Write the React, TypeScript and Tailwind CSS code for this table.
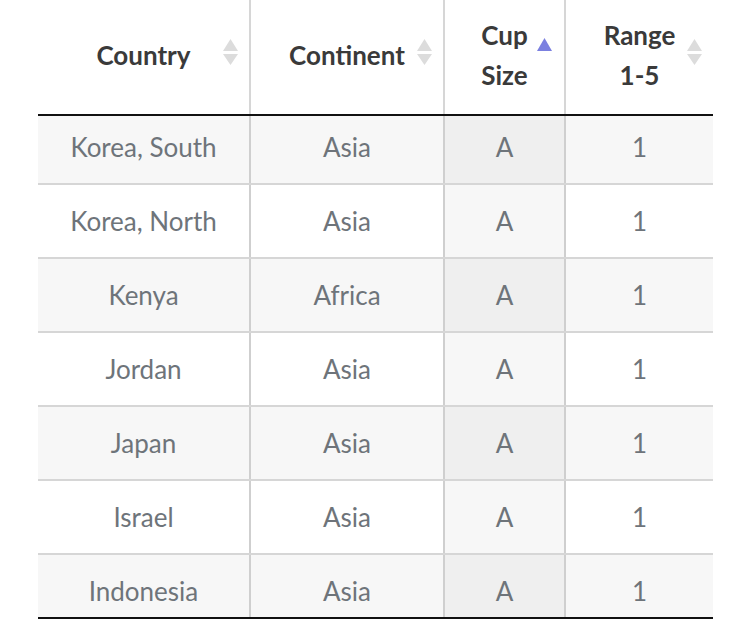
import React from "react";

const rows = [
  ["Korea, South", "Asia", "A", "1"],
  ["Korea, North", "Asia", "A", "1"],
  ["Kenya", "Africa", "A", "1"],
  ["Jordan", "Asia", "A", "1"],
  ["Japan", "Asia", "A", "1"],
  ["Israel", "Asia", "A", "1"],
  ["Indonesia", "Asia", "A", "1"],
];

function SortIcon() {
  return (
    <svg width="17" height="28" viewBox="0 0 17 28" className="absolute right-[10px] top-[38px]">
      <polygon points="8.5,1 16,13 1,13" fill="#dcdcdc" />
      <polygon points="1,16 16,16 8.5,27" fill="#dcdcdc" />
    </svg>
  );
}

const widths = ["w-[213px]", "w-[194px]", "w-[121px]", "w-[147px]"];

export default function App() {
  return (
    <div className="w-[750px] h-[619px] overflow-hidden bg-white" style={{ fontFamily: "Lato, 'Open Sans', sans-serif" }}>
      <div className="ml-[38px] w-[675px]">
        {/* header */}
        <div className="flex h-[116px] text-[26px] font-bold text-[#3a3a3a] border-b-2 border-[#111]">
          <div className="relative w-[213px] flex items-center justify-center pb-1 border-r-2 border-[#d6d6d6]">
            <span>Country</span>
            <SortIcon />
          </div>
          <div className="relative w-[194px] flex items-center justify-center pb-1 border-r-2 border-[#d6d6d6]">
            <span>Continent</span>
            <SortIcon />
          </div>
          <div className="relative w-[121px] flex items-center justify-center pb-1 border-r-2 border-[#d6d6d6]">
            <span className="text-center leading-[40px]">Cup<br />Size</span>
            <svg width="17" height="28" viewBox="0 0 17 28" className="absolute right-[11px] top-[37px]">
              <polygon points="8.5,1 16,14 1,14" fill="#7b80e0" />
            </svg>
          </div>
          <div className="relative w-[147px] flex items-center justify-center pb-1">
            <span className="text-center leading-[40px]">Range<br />1-5</span>
            <SortIcon />
          </div>
        </div>
        {/* body */}
        <div className="h-[501px] overflow-hidden">
          <div className="-mt-[5px]">
            {rows.map((r, i) => (
              <div
                key={i}
                className={`flex h-[74px] border-b-2 border-[#d6d6d6] text-[26px] text-[#6e747a] ${i % 2 === 0 ? "bg-[#f7f7f7]" : "bg-white"}`}
              >
                {r.map((c, j) => (
                  <div
                    key={j}
                    className={`${widths[j]} flex items-center justify-center ${j < 3 ? "border-r-2 border-[#cfcfcf]" : ""} ${j === 2 ? (i % 2 === 0 ? "bg-[#efefef]" : "bg-[#f7f7f7]") : ""}`}
                  >
                    {c}
                  </div>
                ))}
              </div>
            ))}
          </div>
        </div>
        <div className="h-[2px] bg-[#111]" />
      </div>
    </div>
  );
}
